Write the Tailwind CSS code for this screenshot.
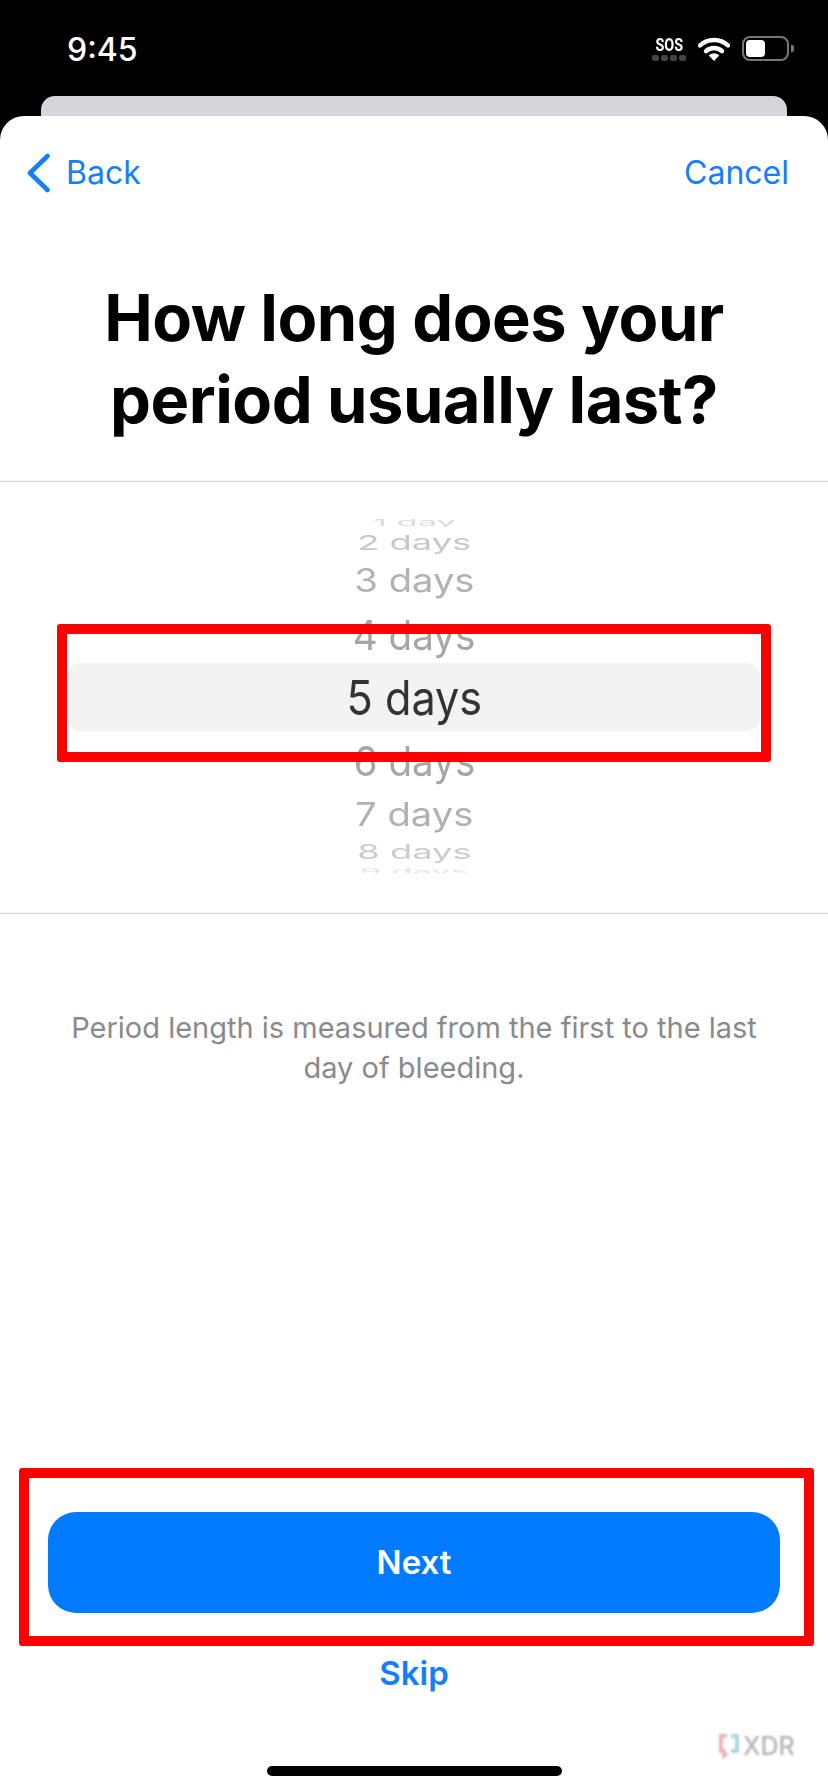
<!DOCTYPE html>
<html lang="en">
<head>
  <meta charset="UTF-8" />
  <meta name="viewport" content="width=device-width, initial-scale=1" />
  <title>Period length</title>
  <script src="https://cdn.jsdelivr.net/npm/@tailwindcss/browser@4"></script>
</head>
<body class="bg-black font-[Inter,sans-serif]">
  <div class="relative w-[828px] h-[1792px] flex flex-col overflow-hidden bg-black">

    <!-- Status bar -->
    <div class="h-[96px] shrink-0 relative flex items-start justify-between pl-[67px] pr-[34px] pt-[30px] text-white">
      <span class="text-[32px] leading-[40px] font-medium">9:45</span>
      <div class="flex items-start gap-[12px] pt-[6px]">
        <div class="flex flex-col items-center w-[34px]">
          <span class="text-[18px] leading-[18px] font-bold scale-x-[0.8] font-[Roboto,sans-serif]">SOS</span>
          <div class="flex gap-[2px] mt-[1px]">
            <span class="w-[7px] h-[6px] rounded-[2px] bg-[#444]"></span>
            <span class="w-[7px] h-[6px] rounded-[2px] bg-[#444]"></span>
            <span class="w-[7px] h-[6px] rounded-[2px] bg-[#444]"></span>
            <span class="w-[7px] h-[6px] rounded-[2px] bg-[#444]"></span>
          </div>
        </div>
        <svg class="w-[32px] h-[25px]" viewBox="0 0 32 25" fill="none">
          <path d="M2 9.5C9.5 2.2 22.5 2.2 30 9.5" stroke="#fff" stroke-width="4.4" stroke-linecap="round"/>
          <path d="M8 15.2C12.5 11 19.5 11 24 15.2" stroke="#fff" stroke-width="4.4" stroke-linecap="round"/>
          <path d="M16 25L10.8 19.4C13.6 17 18.4 17 21.2 19.4Z" fill="#fff"/>
        </svg>
        <div class="flex items-center gap-[2px]">
          <div class="w-[47px] h-[25px] rounded-[8px] border-2 border-[#777] p-[2px]">
            <div class="w-[19px] h-full rounded-[4px] bg-white"></div>
          </div>
          <div class="w-[3px] h-[7px] rounded-r-[2px] bg-[#777]"></div>
        </div>
      </div>
    </div>

    <!-- Card behind the sheet -->
    <div class="h-[20px] shrink-0 mx-[41px] bg-[#d5d5da] rounded-t-[14px]"></div>

    <!-- Sheet -->
    <div class="flex-1 bg-white rounded-t-[24px] flex flex-col">
      <div class="h-[114px] shrink-0 flex items-center justify-between pl-[26px] pr-[39px] text-[#147efb] text-[32px]">
        <div class="flex items-center gap-[15px]">
          <svg class="w-[25px] h-[40px]" viewBox="0 0 25 40" fill="none">
            <path d="M21.5 3L4 20L21.5 37" stroke="#147efb" stroke-width="4.6" stroke-linecap="round" stroke-linejoin="round"/>
          </svg>
          <span>Back</span>
        </div>
        <span>Cancel</span>
      </div>

      <h1 class="h-[251px] shrink-0 pt-[47px] text-center text-black text-[65px] leading-[82px] font-bold tracking-[-0.5px]">How long does your<br>period usually last?</h1>

      <!-- Wheel -->
      <div class="relative h-[433px] shrink-0 border-y border-[#d6d6d8] pt-[37px] flex flex-col items-center text-[46px] leading-none">
        <div class="absolute left-[67px] right-[68px] top-[181px] h-[68px] rounded-[14px] bg-[#f3f3f3]"></div>
        <div class="relative h-[8px] overflow-hidden flex items-center text-[#dcdcdc]"><span class="scale-y-[0.2] scale-x-[0.75]">1 day</span></div>
        <div class="relative h-[30px] flex items-center text-[#c8c8c8]"><span class="scale-y-[0.45] scale-x-[0.79]">2 days</span></div>
        <div class="relative h-[46px] flex items-center text-[#b2b2b2]"><span class="scale-y-[0.7] scale-x-[0.83]">3 days</span></div>
        <div class="relative h-[63px] flex items-center text-[#a6a6a6]"><span class="scale-y-[0.88] scale-x-[0.84]">4 days</span></div>
        <div class="relative h-[64px] flex items-center text-[#333] text-[48px]"><span class="scale-x-[0.9]">5 days</span></div>
        <div class="relative h-[61px] flex items-center text-[#a6a6a6]"><span class="scale-y-[0.9] scale-x-[0.84]">6 days</span></div>
        <div class="relative h-[45px] flex items-center text-[#b2b2b2]"><span class="scale-y-[0.7] scale-x-[0.83]">7 days</span></div>
        <div class="relative h-[32px] flex items-center text-[#cccccc]"><span class="scale-y-[0.43] scale-x-[0.79]">8 days</span></div>
        <div class="relative h-[5px] overflow-hidden flex items-center text-[#e2e2e2]"><span class="scale-y-[0.15] scale-x-[0.75]">9 days</span></div>
      </div>

      <p class="pt-[94px] text-center text-[#8a8a8e] text-[29px] leading-[40px]">Period length is measured from the first to the last<br>day of bleeding.</p>

      <div class="mt-auto flex flex-col items-center pb-[16px]">
        <button class="w-[732px] h-[101px] rounded-[28px] bg-[#007aff] text-white text-[33px] font-semibold">Next</button>
        <a class="mt-[40px] text-[#147efb] text-[33px] leading-[40px] font-semibold">Skip</a>
        <div class="mt-[73px] w-[295px] h-[10px] rounded-full bg-black"></div>
      </div>
    </div>

    <!-- Red annotation boxes -->
    <div class="absolute left-[57px] top-[624px] w-[714px] h-[138px] border-[10px] border-[#ff0000] rounded-[3px]"></div>
    <div class="absolute left-[19px] top-[1468px] w-[795px] h-[178px] border-[10px] border-[#ff0000] rounded-[3px]"></div>

    <!-- Watermark -->
    <div class="absolute left-[717px] top-[1733px] flex items-center gap-[2px] blur-[1px]">
      <svg class="w-[24px] h-[26px]" viewBox="0 0 24 26" fill="none">
        <path d="M10 3H4V18H7V23L10 20" stroke="#eeb4c0" stroke-width="4"/>
        <path d="M14 3H20V18H14" stroke="#a9d6e6" stroke-width="4"/>
      </svg>
      <span class="text-[25px] leading-[26px] font-medium text-[#b4b4b4]">XDR</span>
    </div>
  </div>
</body>
</html>
